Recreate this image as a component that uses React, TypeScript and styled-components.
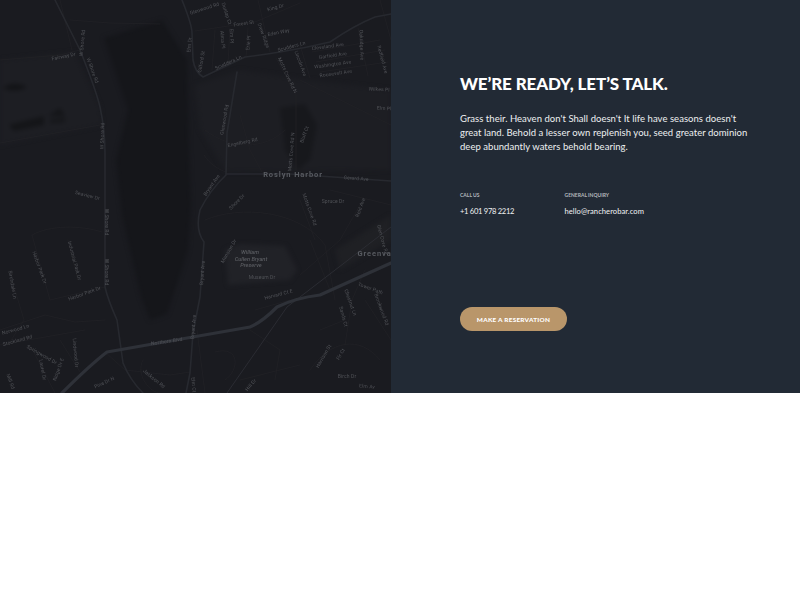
import React from "react";
import styled, { createGlobalStyle } from "styled-components";

const GlobalStyle = createGlobalStyle`
  html, body {
    margin: 0;
    padding: 0;
    background: #fff;
  }
`;

const Section = styled.section`
  display: grid;
  grid-template-columns: 391px 1fr;
  height: 393px;
  width: 800px;
`;

const MapPane = styled.div`
  background: #1a1b20;
  overflow: hidden;
`;

const MapSvg = styled.svg`
  display: block;
  width: 391px;
  height: 393px;
`;

const InfoPane = styled.div`
  background: #222a35;
  display: flex;
  flex-direction: column;
  align-items: flex-start;
  padding: 73px 40px 0 69px;
  color: #fff;
  font-family: "Lato", "Liberation Sans", sans-serif;
`;

const Title = styled.h2`
  margin: 0;
  font-size: 17px;
  line-height: 22px;
  font-weight: 900;
  letter-spacing: -0.12px;
  white-space: nowrap;
`;

const Copy = styled.p`
  margin: 17px 0 0;
  font-size: 9.5px;
  line-height: 14px;
  letter-spacing: 0.04px;
  color: #eef0f1;
  white-space: nowrap;
`;

const ContactRow = styled.div`
  display: flex;
  margin-top: 37px;
`;

const ContactItem = styled.div`
  width: 104.5px;
`;

const ContactLabel = styled.div`
  font-size: 5px;
  line-height: 8px;
  font-weight: 700;
  color: #b4b8bd;
  white-space: nowrap;
`;

const ContactValue = styled.div<{ $spacing: number }>`
  margin-top: 7px;
  font-size: 7.6px;
  line-height: 10px;
  letter-spacing: ${(p) => p.$spacing}px;
  color: #f2f3f4;
  white-space: nowrap;
`;

const ReserveButton = styled.button`
  margin-top: 91px;
  width: 107px;
  height: 24px;
  padding: 0;
  border: none;
  border-radius: 12px;
  background: #b9966a;
  color: #fff;
  font-family: inherit;
  font-size: 6.4px;
  font-weight: 900;
  letter-spacing: 0.25px;
`;

const Road = styled.path<{ $w?: number; $c?: string }>`
  fill: none;
  stroke: ${(p) => p.$c ?? "#25272d"};
  stroke-width: ${(p) => p.$w ?? 1};
  stroke-linecap: round;
  stroke-linejoin: round;
`;

const Label = styled.text<{ $bold?: boolean }>`
  font-family: "Roboto", "Liberation Sans", sans-serif;
  font-size: ${(p) => (p.$bold ? 7.5 : 5)}px;
  font-weight: ${(p) => (p.$bold ? 700 : 400)};
  letter-spacing: ${(p) => (p.$bold ? 0.9 : 0.1)}px;
  fill: ${(p) => (p.$bold ? "#585b61" : "#505257")};
  text-anchor: middle;
`;

const ParkLabel = styled.text`
  font-family: "Roboto", "Liberation Sans", sans-serif;
  font-size: 5.6px;
  font-style: italic;
  font-weight: 500;
  fill: #5a5c61;
  text-anchor: middle;
`;

const mainRoads = [
  "M55 0 L80 50 Q96 90 100 107 Q105 130 105 153 L105 287 Q108 300 117 320 L123 363 Q130 380 143 393",
  "M182 0 Q192 25 192 33 L193 60 Q195 72 203 77 L245 57 Q262 55 280 52 Q305 48 330 42 Q355 25 375 17 L391 14",
  "M237 72 L227 133 L226 175 Q210 190 200 210 Q195 230 204 242 L200 297 L193 333 L190 373 L186 393",
  "M226 174 L290 174 L391 181",
];

const sideRoads = [
  "M60 0 L72 50",
  "M70 20 L110 23 L160 24",
  "M0 143 L100 125",
  "M0 60 L60 55 L80 50",
  "M195 31 L255 22 L300 3",
  "M215 30 L212 70",
  "M230 28 L228 64",
  "M248 28 L246 58",
  "M258 0 L270 52",
  "M276 58 L296 95 L296 170",
  "M300 45 L310 78",
  "M312 52 L380 40",
  "M316 62 L385 50",
  "M320 72 L388 62",
  "M380 0 L391 40",
  "M358 28 L368 76",
  "M300 80 L391 125",
  "M205 130 C230 150 265 150 285 130",
  "M204 155 C210 165 220 170 226 172",
  "M240 115 L250 150 L262 172",
  "M205 220 C240 205 300 210 325 245 L335 300",
  "M32 235 C50 225 80 225 102 232",
  "M32 235 L50 300 L105 287",
  "M68 240 L78 280",
  "M0 330 L45 315 L75 322 L105 320",
  "M0 345 L85 330",
  "M15 290 L24 320 L8 345",
  "M30 345 L55 393",
  "M60 340 L80 372",
  "M105 352 L125 370 L170 375 L190 372",
  "M143 360 C135 375 150 393 160 393",
  "M197 330 L205 393",
  "M215 352 C240 345 240 370 225 380",
  "M250 330 L280 350 L275 380",
  "M255 310 L290 300",
  "M310 370 C330 340 360 335 380 360",
  "M345 345 L352 300 L365 270",
  "M320 330 L345 320",
  "M310 240 L330 290",
  "M360 205 L340 240 L300 275",
  "M365 300 L391 340",
  "M300 200 L315 240",
  "M330 190 L391 205",
  "M240 380 L300 365",
];

type MapLabel = [string, number, number, number];

const labels: MapLabel[] = [
  ["Glenwood Rd", 205, 10, -18],
  ["Dunlap Ct", 225, 14, 72],
  ["Forest St", 244, 25, -8],
  ["King Dr", 276, 9, -15],
  ["Drew Ridge", 262, 36, 70],
  ["Eden Way", 279, 34, -12],
  ["Elm Dr", 191, 45, -85],
  ["Gilford St", 203, 62, -80],
  ["Alma Pl", 221, 40, 85],
  ["Elm Pl", 230, 36, 88],
  ["Erie Pl", 250, 43, -85],
  ["Scudders Ln", 229, 64, -25],
  ["Scudders Ln", 292, 48, -15],
  ["Cleveland Ave", 328, 48, -8],
  ["Garfield Ave", 333, 57, -8],
  ["Washington Ave", 333, 66, -8],
  ["Roosevelt Ave", 336, 75, -8],
  ["Oakridge Ave", 360, 45, 88],
  ["Redfield Ave", 381, 60, 75],
  ["Wilkes Pl", 379, 91, 3],
  ["Elm Pl", 384, 110, 3],
  ["Motts Cove Rd N", 286, 76, 65],
  ["Lincoln Ave", 299, 64, 70],
  ["Glenwood Rd", 226, 120, -80],
  ["Engelberg Rd", 243, 144, -12],
  ["Motts Cove Rd N", 293, 152, -85],
  ["Bluff Ct", 306, 135, -70],
  ["Gerard Ave", 356, 180, 5],
  ["Bryant Ave", 213, 186, -55],
  ["Fairway Dr", 64, 58, -12],
  ["W Shore Rd", 84, 43, -85],
  ["W Shore Rd", 91, 71, 70],
  ["W Shore Rd", 104, 136, -88],
  ["Seaview Dr", 87, 197, 15],
  ["W Shore Rd", 105, 222, 90],
  ["W Shore Rd", 105, 272, 90],
  ["Harbor Park Dr", 85, 295, -20],
  ["Harbor Park Dr", 38, 268, 70],
  ["Industrial Park Dr", 73, 261, 75],
  ["Birchdale Ln", 11, 285, 80],
  ["Norwood Ln", 16, 331, -15],
  ["Stockland Rd", 18, 342, -15],
  ["Northern Blvd", 167, 343, -8],
  ["Bryant Ave", 204, 273, -85],
  ["Bryant Ave", 195, 327, -85],
  ["Mansion Dr", 230, 252, -60],
  ["Museum Dr", 262, 279, 0],
  ["Harvard Ct E", 279, 296, -15],
  ["Spruce Dr", 333, 203, 0],
  ["Reid Ave", 362, 208, -70],
  ["Motts Cove Rd", 308, 210, 70],
  ["Shore Dr", 238, 203, -45],
  ["Tower Path", 370, 290, 20],
  ["Chestnut Ln", 349, 303, 70],
  ["Sands Ct", 342, 317, 75],
  ["Brookwood Rd", 380, 310, 70],
  ["Glen Cove Rd", 381, 240, 75],
  ["Harrison St", 325, 357, -60],
  ["Fir Ct", 342, 355, -60],
  ["Birch Dr", 347, 378, 0],
  ["Elm Av", 367, 388, 5],
  ["Pine Dr N", 105, 384, -25],
  ["Springwood Dr", 41, 356, 30],
  ["Laurel Dr", 41, 370, 80],
  ["Ridge Dr E", 60, 370, -70],
  ["Lindwood Dr", 74, 353, 85],
  ["Jackson Rd", 153, 380, 40],
  ["Mill Rd", 9, 382, 70],
  ["Elm Ct", 192, 385, 85],
  ["Hill Dr", 252, 386, -50],
];

function MapArt() {
  return (
    <MapSvg viewBox="0 0 391 393" aria-hidden="true">
      <defs>
        <filter id="soft" colorInterpolationFilters="sRGB">
          <feGaussianBlur stdDeviation="0.3" />
        </filter>
        <filter id="softer" colorInterpolationFilters="sRGB">
          <feGaussianBlur stdDeviation="2" />
        </filter>
      </defs>
      <g filter="url(#softer)">
        {/* water */}
        <path
          d="M104 38 L162 20 L187 60 L189 150 L191 205 L188 250 L167 314 L150 320 L141 297 L122 215 L116 160 L128 110 Z"
          fill="#15161a"
        />
        <path d="M0 60 L75 52 L100 107 L102 125 L0 145 Z" fill="#1d1e23" />
        <path d="M195 85 L240 70 L310 80 L391 90 L391 170 L226 172 L200 130 Z" fill="#1d1e23" />
        <path d="M225 250 L240 244 L285 246 L297 270 L290 280 L250 283 L228 285 Z" fill="#212227" />
        <path d="M335 250 L391 215 L391 240 L340 270 Z" fill="#1f2024" />
        <path d="M280 108 L305 104 L317 125 L310 160 L298 170 L285 150 Z" fill="#17181c" />
        {/* ponds */}
        <path d="M3 88 Q14 80 27 87 Q15 94 3 88 Z" fill="#131417" />
        <path d="M9 125 L44 116 L44 125 L14 131 Z" fill="#141518" />
        <path d="M48 116 L60 108 L65 116 Z M50 120 L65 118 L65 122 L50 123 Z" fill="#141518" />
      </g>
      <g filter="url(#soft)">
        {sideRoads.map((d, i) => (
          <Road key={i} d={d} $w={0.7} $c="#222327" />
        ))}
        {mainRoads.map((d, i) => (
          <Road key={i} d={d} $w={1.6} $c="#27292f" />
        ))}
        <Road d="M227 393 L287 307 L391 227" $w={0.9} $c="#2c2e34" />
        <Road
          d="M62 393 Q90 365 107 352 L250 327 Q262 322 277 307 Q295 298 320 295 L391 263"
          $w={3.2}
          $c="#2e3138"
        />
        {labels.map(([name, x, y, r], i) => (
          <Label key={i} x={x} y={y} transform={`rotate(${r} ${x} ${y})`}>
            {name}
          </Label>
        ))}
        <Label $bold x={293} y={177}>Roslyn Harbor</Label>
        <ParkLabel x={250} y={254}>William</ParkLabel>
        <ParkLabel x={251} y={260.5}>Cullen Bryant</ParkLabel>
        <ParkLabel x={251} y={267}>Preserve</ParkLabel>
        <Label $bold x={374.5} y={256}>Greenva</Label>
      </g>
    </MapSvg>
  );
}

export default function App() {
  return (
    <>
      <GlobalStyle />
      <Section>
        <MapPane>
          <MapArt />
        </MapPane>
        <InfoPane>
          <Title>WE’RE READY, LET’S TALK.</Title>
          <Copy>
            Grass their. Heaven don't Shall doesn't It life have seasons doesn't
            <br />
            great land. Behold a lesser own replenish you, seed greater dominion
            <br />
            deep abundantly waters behold bearing.
          </Copy>
          <ContactRow>
            <ContactItem>
              <ContactLabel>CALL US</ContactLabel>
              <ContactValue $spacing={-0.3}>+1 601 978 2212</ContactValue>
            </ContactItem>
            <ContactItem>
              <ContactLabel>GENERAL INQUIRY</ContactLabel>
              <ContactValue $spacing={0.05}>hello@rancherobar.com</ContactValue>
            </ContactItem>
          </ContactRow>
          <ReserveButton>MAKE A RESERVATION</ReserveButton>
        </InfoPane>
      </Section>
    </>
  );
}
